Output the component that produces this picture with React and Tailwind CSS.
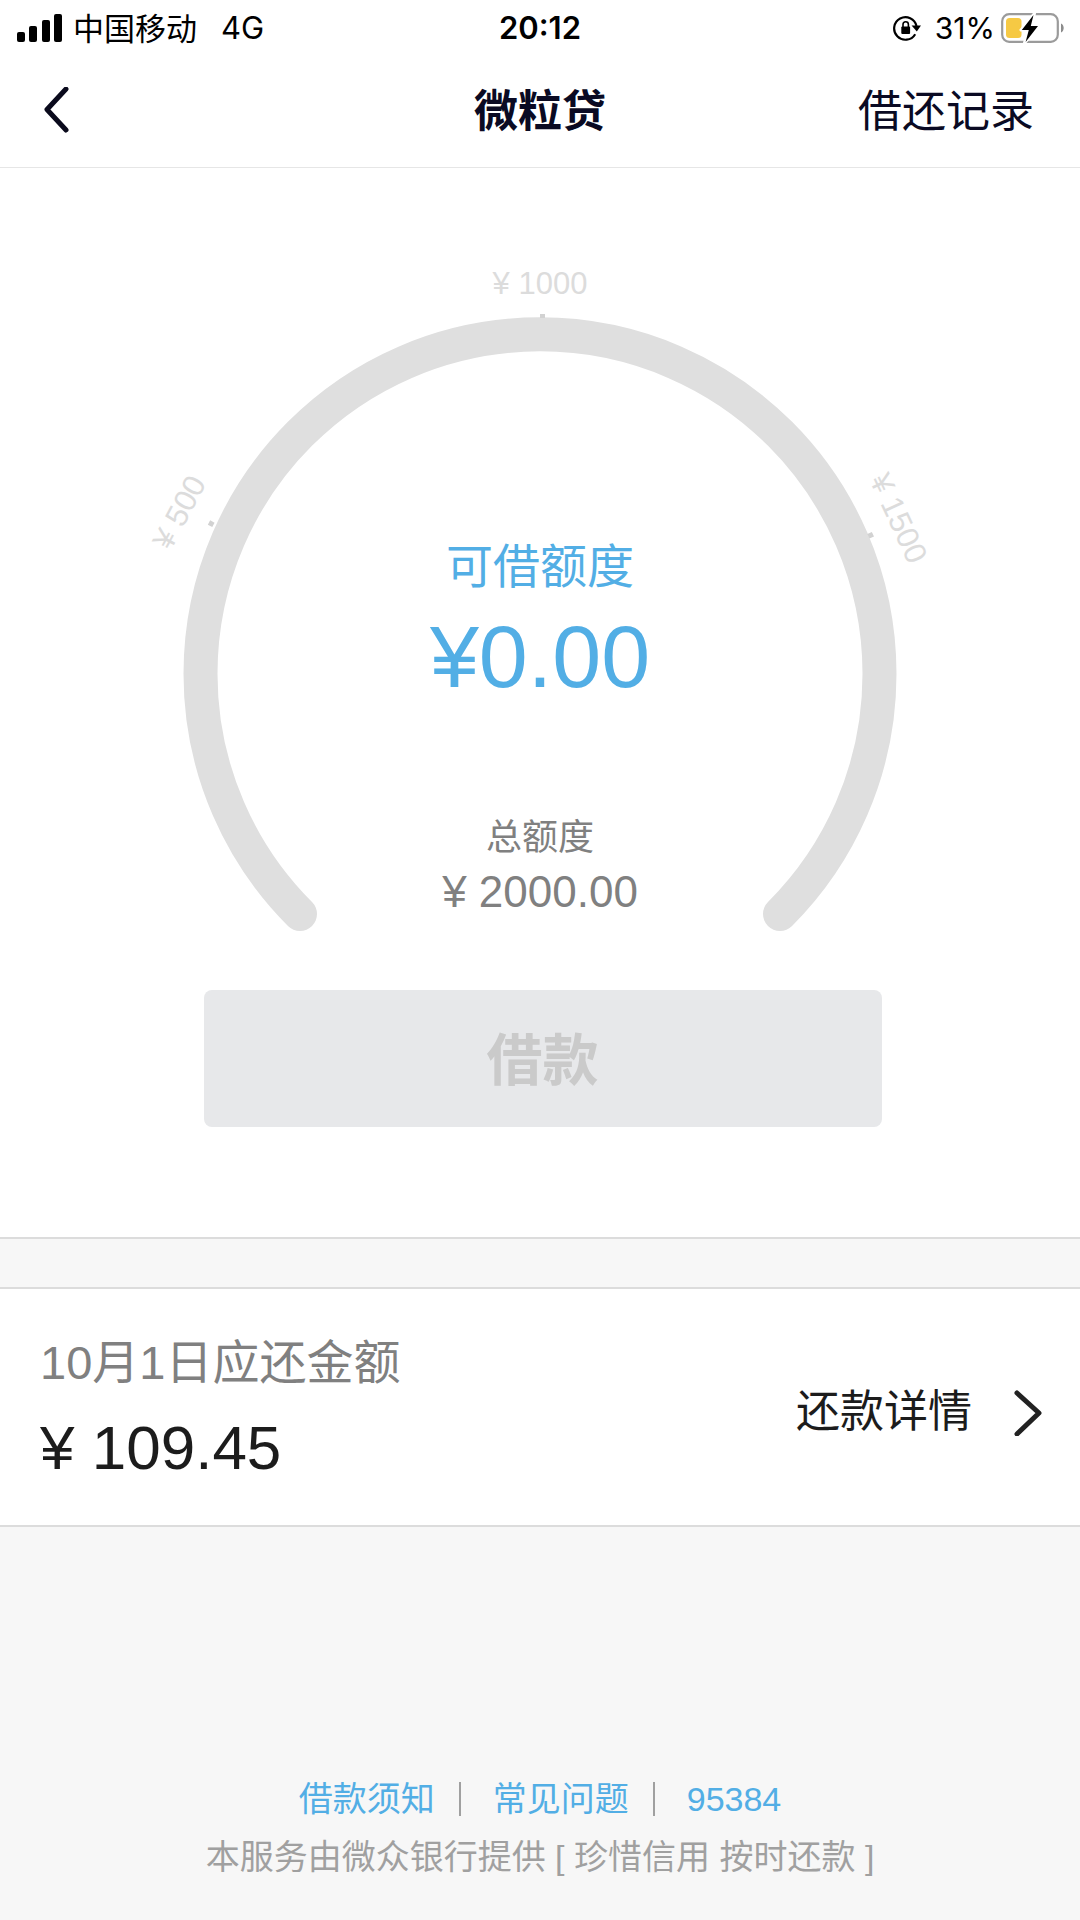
import React from "react";

const TICKS = [
  { label: "¥ 500", x: 179, y: 512, angle: -62 },
  { label: "¥ 1000", x: 540, y: 283, angle: 0 },
  { label: "¥ 1500", x: 899, y: 518, angle: 65 },
];

function SignalIcon() {
  return (
    <svg width="46" height="28" viewBox="0 0 46 28" fill="#000" aria-hidden="true">
      <rect x="0" y="18" width="8" height="10" rx="2" />
      <rect x="12" y="12" width="8" height="16" rx="2" />
      <rect x="25" y="6" width="8" height="22" rx="2" />
      <rect x="37" y="0" width="8" height="28" rx="2" />
    </svg>
  );
}

function RotationLockIcon() {
  return (
    <svg width="28" height="26" viewBox="0 0 28 26" fill="none" aria-hidden="true">
      <path d="M22.2 19.2A11.3 11.3 0 1 1 23.5 11" stroke="#000" strokeWidth="2.2" />
      <path d="M18.6 10.4H28L23.8 16.6Z" fill="#000" />
      <rect x="8.3" y="11.5" width="8.8" height="7.5" rx="1" fill="#000" />
      <path d="M10 12V9.5a2.7 2.7 0 0 1 5.4 0V12" stroke="#000" strokeWidth="1.6" />
    </svg>
  );
}

function BatteryIcon() {
  return (
    <svg width="64" height="32" viewBox="0 0 64 32" fill="none" aria-hidden="true">
      <rect x="1.2" y="2.2" width="55.6" height="27.6" rx="7" stroke="#9b9b9b" strokeWidth="2.2" />
      <path d="M60 11.5c3.6 1.6 3.6 7.4 0 9z" fill="#8c8c8c" />
      <rect x="5" y="6" width="15.5" height="20" rx="3.5" fill="#f6c944" />
      <path d="M33.5 1.5L20 18H27L23.5 31L38 14H30.5Z" fill="#fff" stroke="#fff" strokeWidth="3" strokeLinejoin="round" />
      <path d="M32.5 3L20.8 18H27.8L24.6 30L37 14H29.8Z" fill="#000" />
    </svg>
  );
}

function StatusBar() {
  return (
    <div className="grid h-[54px] grid-cols-3 items-center px-[15px] font-['Inter','Noto_Sans_CJK_SC',sans-serif] text-[31px] leading-[54px] text-black">
      <div className="flex items-center pl-0.5">
        <SignalIcon />
        <span className="ml-2.5 pt-0.5">中国移动</span>
        <span className="ml-6">4G</span>
      </div>
      <div className="text-center text-[31px] font-semibold">20:12</div>
      <div className="flex items-center justify-end">
        <RotationLockIcon />
        <span className="mr-1.5 ml-3.5 text-[30px]">31%</span>
        <BatteryIcon />
      </div>
    </div>
  );
}

function NavBar() {
  return (
    <header className="grid h-[114px] grid-cols-3 items-center border-b border-[#e6e6e6] text-[44px] leading-[52px] text-[#0a0a23]">
      <button type="button" aria-label="返回" className="ml-11 w-fit">
        <svg width="26" height="48" viewBox="0 0 26 48" fill="none" aria-hidden="true">
          <path d="M22 2L3 22.5L22 43" stroke="#0a0a1c" strokeWidth="5" strokeLinecap="round" strokeLinejoin="round" />
        </svg>
      </button>
      <h1 className="pt-0.5 text-center font-bold">微粒贷</h1>
      <button type="button" className="mr-[46px] justify-self-end pt-0.5">借还记录</button>
    </header>
  );
}

function Gauge() {
  return (
    <div className="grid justify-items-center">
      <svg className="col-start-1 row-start-1" width="820" height="680" viewBox="130 260 820 680" fill="none">
        <path d="M300 913A339.5 339.5 0 1 1 780 913" transform="translate(0 1)" stroke="#dfdfdf" strokeWidth="34" strokeLinecap="round" />
        <g fill="#d2d2d2">
          <rect x="540" y="314" width="5" height="4" />
          <rect x="209" y="521" width="5" height="5" transform="rotate(28 211 523)" />
          <rect x="868" y="533" width="5" height="5" transform="rotate(-25 870 535)" />
        </g>
        <g fill="#dcdcdc" fontSize="31" textAnchor="middle">
          {TICKS.map((t) => (
            <text key={t.label} x="0" y="11" transform={`translate(${t.x} ${t.y}) rotate(${t.angle})`}>
              {t.label}
            </text>
          ))}
        </g>
      </svg>
      <div className="col-start-1 row-start-1 flex flex-col items-center pt-[279px]">
        <p className="text-[47px] leading-[56px] text-[#52aee5]">可借额度</p>
        <p className="mt-[18px] text-[88px] leading-[88px] text-[#52aee5]">¥0.00</p>
        <p className="mt-[115px] text-[36px] leading-[44px] text-[#808080]">总额度</p>
        <p className="mt-2.5 text-[44px] leading-[44px] text-[#808080]">¥ 2000.00</p>
      </div>
    </div>
  );
}

export default function App() {
  return (
    <div className="flex min-h-screen flex-col bg-[#f7f7f7] font-['Liberation_Sans','Noto_Sans_CJK_SC',sans-serif]">
      <div className="bg-white">
        <StatusBar />
        <NavBar />
        <section className="flex flex-col items-center border-b-2 border-[#dcdcdc] pt-[92px] pb-[110px]">
          <Gauge />
          <div className="mt-[50px] pl-[5px]">
            <button
              type="button"
              disabled
              className="h-[137px] w-[678px] rounded-lg bg-[#e7e8ea] pt-1 text-[56px] font-bold text-[#cacaca]"
            >
              借款
            </button>
          </div>
        </section>
      </div>

      <section className="mt-12 flex items-center justify-between border-y-2 border-[#dcdcdc] bg-white pt-11 pr-[38px] pb-[39px] pl-10">
        <div>
          <p className="text-[47px] leading-[60px] text-[#808080]">10月1日应还金额</p>
          <p className="mt-[17px] text-[62px] leading-[76px] text-[#1c1c1c]">¥ 109.45</p>
        </div>
        <a href="#repayment" className="flex items-center pt-1 text-[44px] leading-[52px] text-[#1c1c1c]">
          还款详情
          <svg className="ml-[42px]" width="28" height="48" viewBox="0 0 28 48" fill="none" aria-hidden="true">
            <path d="M3 5L25 25L3 46" stroke="#222" strokeWidth="5" strokeLinecap="round" strokeLinejoin="round" />
          </svg>
        </a>
      </section>

      <footer className="mt-auto flex flex-col items-center pb-[39px] text-[34px] leading-[48px] text-[#a0a0a0]">
        <nav className="flex items-center text-[#52aee5]">
          <a href="#notice">借款须知</a>
          <span className="mr-8 ml-6 h-[34px] w-0.5 bg-[#a0a0a0]" />
          <a href="#faq">常见问题</a>
          <span className="mr-8 ml-6 h-[34px] w-0.5 bg-[#a0a0a0]" />
          <a href="tel:95384">95384</a>
        </nav>
        <p className="mt-2.5">本服务由微众银行提供 [ 珍惜信用 按时还款 ]</p>
      </footer>
    </div>
  );
}
